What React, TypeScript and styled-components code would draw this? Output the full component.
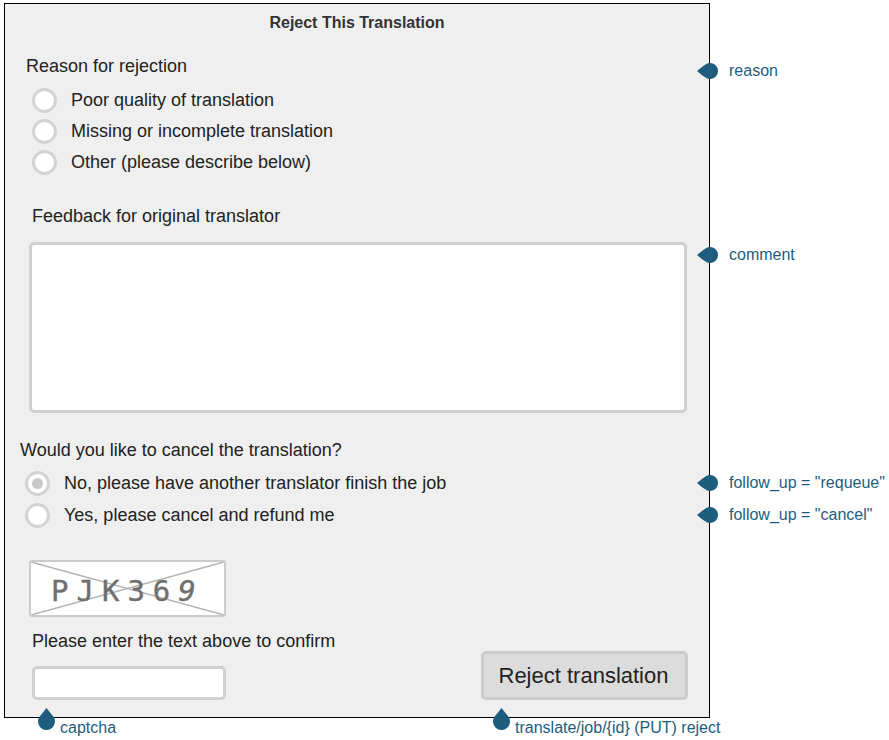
import React from "react";
import styled, { createGlobalStyle } from "styled-components";

const GlobalStyle = createGlobalStyle`
  html, body { margin: 0; padding: 0; background: #ffffff; }
  body { font-family: "Liberation Sans", Arial, Helvetica, sans-serif; }
`;

const ANNOT = "#1e5d7e";

const Page = styled.div`
  padding: 3px 0 0 4px;
  min-height: 740px;
  box-sizing: border-box;
`;

const Panel = styled.div`
  position: relative;
  box-sizing: border-box;
  width: 706px;
  height: 715px;
  border: 1px solid #000;
  background: #efefef;
  display: flex;
  flex-direction: column;
`;

const Title = styled.div`
  margin-top: 9px;
  text-align: center;
  font-weight: bold;
  font-size: 16px;
  line-height: 20px;
  color: #333;
`;

const FieldLabel = styled.div<{ $pl: number; $mt: number }>`
  position: relative;
  padding-left: ${(p) => p.$pl}px;
  margin-top: ${(p) => p.$mt}px;
  font-size: 18px;
  line-height: 20px;
  color: #222;
`;

const RadioGroup = styled.div<{ $pl: number; $mt: number }>`
  display: flex;
  flex-direction: column;
  margin-top: ${(p) => p.$mt}px;
  padding-left: ${(p) => p.$pl}px;
`;

const RadioRow = styled.label<{ $h: number }>`
  position: relative;
  display: flex;
  align-items: center;
  gap: 14px;
  height: ${(p) => p.$h}px;
  font-size: 18px;
  color: #222;
`;

const RadioCircle = styled.span<{ $checked?: boolean }>`
  box-sizing: border-box;
  flex: none;
  width: 25px;
  height: 25px;
  border-radius: 50%;
  border: 3px solid #d3d3d3;
  background: #fff;
  display: flex;
  align-items: center;
  justify-content: center;
  &::after {
    content: "";
    display: ${(p) => (p.$checked ? "block" : "none")};
    width: 11px;
    height: 11px;
    border-radius: 50%;
    background: #c9c9c9;
  }
`;

const TextareaBlock = styled.div`
  position: relative;
  margin-top: 16px;
  padding-left: 24px;
  height: 171px;
`;

const TextArea = styled.textarea`
  box-sizing: border-box;
  display: block;
  width: 658px;
  height: 171px;
  border: 3px solid #d0d0d0;
  border-radius: 5px;
  background: #fff;
  resize: none;
  outline: none;
`;

const BottomRow = styled.div`
  margin-top: 29px;
  padding: 0 21px 0 24px;
  display: flex;
  align-items: flex-end;
  justify-content: space-between;
`;

const CaptchaColumn = styled.div`
  display: flex;
  flex-direction: column;
`;

const CaptchaBox = styled.div`
  position: relative;
  box-sizing: border-box;
  width: 197px;
  height: 57px;
  border: 2px solid #cbcbcb;
  border-radius: 3px;
  background: #fff;
  display: flex;
  align-items: center;
  padding-left: 20px;
  overflow: hidden;
`;

const CaptchaLines = styled.svg`
  position: absolute;
  inset: 0;
  width: 100%;
  height: 100%;
`;

const CaptchaText = styled.span`
  position: relative;
  font-family: "DejaVu Sans Mono", "Liberation Mono", monospace;
  font-size: 29px;
  letter-spacing: 8px;
  color: #6f6f6f;
  margin-top: 4px;
  -webkit-text-stroke: 0.4px #6f6f6f;
`;

const Italic = styled.span`
  font-style: italic;
`;

const CaptionLabel = styled.div`
  margin-top: 14px;
  padding-left: 3px;
  font-size: 18px;
  line-height: 20px;
  color: #222;
`;

const InputWrap = styled.div`
  position: relative;
  margin-top: 15px;
  margin-left: 3px;
`;

const TextInput = styled.input`
  box-sizing: border-box;
  display: block;
  width: 194px;
  height: 34px;
  border: 3px solid #d0d0d0;
  border-radius: 5px;
  background: #fff;
  outline: none;
`;

const ButtonWrap = styled.div`
  position: relative;
`;

const RejectButton = styled.button`
  box-sizing: border-box;
  width: 207px;
  height: 49px;
  border: 3px solid #cccccc;
  border-radius: 5px;
  background: #dcdcdc;
  font-family: "Liberation Sans", Arial, sans-serif;
  font-size: 22px;
  color: #222;
  padding: 0 2px 0 0;
  cursor: pointer;
`;

const SideNote = styled.div<{ $center: string }>`
  position: absolute;
  left: calc(100% - 12px);
  top: ${(p) => p.$center};
  transform: translateY(-50%);
  display: flex;
  align-items: center;
  gap: 11px;
  white-space: nowrap;
  z-index: 2;
`;

const BottomNote = styled.div<{ $left: number }>`
  position: absolute;
  left: ${(p) => p.$left}px;
  top: calc(100% + 8px);
  display: flex;
  align-items: flex-start;
  gap: 5px;
  white-space: nowrap;
  z-index: 2;
`;

const NoteText = styled.span<{ $mt?: number }>`
  font-size: 16px;
  line-height: 18px;
  color: ${ANNOT};
  margin-top: ${(p) => p.$mt ?? 0}px;
`;

const LeftDrop = () => (
  <svg width="21" height="16" viewBox="0 0 21 16" style={{ display: "block" }}>
    <path d="M0 8 Q4.5 4 8.08 1.7 A8 8 0 1 1 8.08 14.3 Q4.5 12 0 8 Z" fill={ANNOT} />
  </svg>
);

const UpDrop = () => (
  <svg width="17" height="22" viewBox="0 0 17 22" style={{ display: "block" }}>
    <path d="M8.5 0 Q12 4.5 15.1 8.15 A8.5 8.5 0 1 1 1.9 8.15 Q5 4.5 8.5 0 Z" fill={ANNOT} />
  </svg>
);

const Side = ({ center, text }: { center: string; text: string }) => (
  <SideNote $center={center}>
    <LeftDrop />
    <NoteText>{text}</NoteText>
  </SideNote>
);

const Bottom = ({ left, text }: { left: number; text: string }) => (
  <BottomNote $left={left}>
    <UpDrop />
    <NoteText $mt={11}>{text}</NoteText>
  </BottomNote>
);

export default function App() {
  return (
    <Page>
      <GlobalStyle />
      <Panel>
        <Title>Reject This Translation</Title>

        <FieldLabel $pl={21} $mt={23}>
          Reason for rejection
          <Side center="calc(50% + 5px)" text="reason" />
        </FieldLabel>
        <RadioGroup $pl={27} $mt={9}>
          <RadioRow $h={31}>
            <RadioCircle />
            Poor quality of translation
          </RadioRow>
          <RadioRow $h={31}>
            <RadioCircle />
            Missing or incomplete translation
          </RadioRow>
          <RadioRow $h={31}>
            <RadioCircle />
            Other (please describe below)
          </RadioRow>
        </RadioGroup>

        <FieldLabel $pl={27} $mt={28}>
          Feedback for original translator
        </FieldLabel>
        <TextareaBlock>
          <TextArea />
          <Side center="13px" text="comment" />
        </TextareaBlock>

        <FieldLabel $pl={15} $mt={27}>
          Would you like to cancel the translation?
        </FieldLabel>
        <RadioGroup $pl={20} $mt={7}>
          <RadioRow $h={32}>
            <RadioCircle $checked />
            No, please have another translator finish the job
            <Side center="50%" text={'follow_up = "requeue"'} />
          </RadioRow>
          <RadioRow $h={32}>
            <RadioCircle />
            Yes, please cancel and refund me
            <Side center="50%" text={'follow_up = "cancel"'} />
          </RadioRow>
        </RadioGroup>

        <BottomRow>
          <CaptchaColumn>
            <CaptchaBox>
              <CaptchaLines viewBox="0 0 193 53" preserveAspectRatio="none">
                <line x1="0" y1="0" x2="193" y2="53" stroke="#b3b3b3" strokeWidth="1.5" />
                <line x1="0" y1="53" x2="193" y2="0" stroke="#b3b3b3" strokeWidth="1.5" />
              </CaptchaLines>
              <CaptchaText>
                PJK36<Italic>9</Italic>
              </CaptchaText>
            </CaptchaBox>
            <CaptionLabel>Please enter the text above to confirm</CaptionLabel>
            <InputWrap>
              <TextInput />
              <Bottom left={6} text="captcha" />
            </InputWrap>
          </CaptchaColumn>
          <ButtonWrap>
            <RejectButton>Reject translation</RejectButton>
            <Bottom left={12} text="translate/job/{id} (PUT) reject" />
          </ButtonWrap>
        </BottomRow>
      </Panel>
    </Page>
  );
}
